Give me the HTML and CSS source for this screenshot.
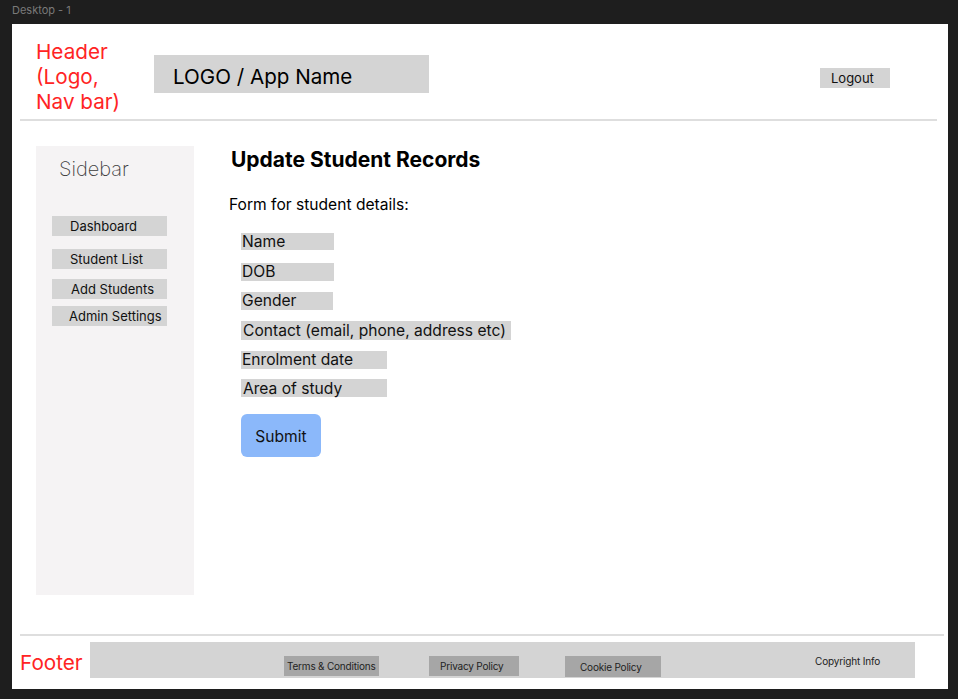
FILE: index.html
```html
<!DOCTYPE html>
<html lang="en">
<head>
<meta charset="utf-8">
<title>Desktop - 1</title>
<link rel="stylesheet" href="styles.css">
</head>
<body>
<div class="canvas-label">Desktop - 1</div>
<div class="frame">
  <header class="header">
    <div class="note note-header">Header<br>(Logo,<br>Nav bar)</div>
    <div class="logo">LOGO / App Name</div>
    <button class="logout">Logout</button>
  </header>
  <div class="body">
    <aside class="sidebar">
      <div class="sidebar-title">Sidebar</div>
      <nav class="side-nav">
        <a class="side-item side-dash">Dashboard</a>
        <a class="side-item side-list">Student List</a>
        <a class="side-item side-add">Add Students</a>
        <a class="side-item side-admin">Admin Settings</a>
      </nav>
    </aside>
    <main class="content">
      <h1 class="title">Update Student Records</h1>
      <p class="form-intro">Form for student details:</p>
      <form class="form">
        <div class="field field-name">Name</div>
        <div class="field field-dob">DOB</div>
        <div class="field field-gender">Gender</div>
        <div class="field field-contact">Contact (email, phone, address etc)</div>
        <div class="field field-enrol">Enrolment date</div>
        <div class="field field-area">Area of study</div>
        <button type="button" class="submit">Submit</button>
      </form>
    </main>
  </div>
  <footer class="footer">
    <div class="footer-row">
      <div class="note note-footer">Footer</div>
      <div class="footer-bar">
        <a class="foot-link foot-terms">Terms &amp; Conditions</a>
        <a class="foot-link foot-privacy">Privacy Policy</a>
        <a class="foot-link foot-cookie">Cookie Policy</a>
        <span class="copyright">Copyright Info</span>
      </div>
    </div>
  </footer>
</div>
</body>
</html>
```

FILE: styles.css
```css
* { box-sizing: border-box; }

html, body {
  margin: 0;
  padding: 0;
  background: #1e1e1e;
  font-family: Inter, "Noto Sans", sans-serif;
  color: #000;
}

body {
  width: 958px;
  height: 699px;
  overflow: hidden;
}

.canvas-label {
  height: 24px;
  padding-left: 12px;
  font-size: 11px;
  line-height: 20px;
  color: #7a7a7a;
}

.frame {
  margin-left: 12px;
  width: 936px;
  height: 665px;
  background: #fff;
  display: flex;
  flex-direction: column;
}

/* Header */
.header {
  margin-left: 8px;
  width: 917px;
  height: 97px;
  border-bottom: 2px solid #dedede;
  padding: 15px 0 0 16px;
  display: flex;
  align-items: flex-start;
}

.note {
  color: #ff2424;
  font-size: 20.7px;
  line-height: 25px;
}

.note-header {
  width: 118px;
  flex: none;
}

.logo {
  margin-top: 16px;
  width: 275px;
  height: 38px;
  background: #d4d4d4;
  padding-left: 19px;
  font-size: 20.6px;
  line-height: 43px;
}

.logout {
  margin: 29px 47px 0 auto;
  width: 70px;
  height: 20px;
  border: 0;
  background: #d4d4d4;
  padding: 0 0 0 11px;
  text-align: left;
  font-family: inherit;
  font-size: 13px;
  line-height: 16px;
  color: #111;
}

/* Body */
.body {
  flex: 1;
  display: flex;
  align-items: flex-start;
  padding: 25px 0 0 24px;
  gap: 35px;
}

.sidebar {
  width: 158px;
  height: 449px;
  background: #f5f3f4;
  padding: 11px 0 0 16px;
}

.sidebar-title {
  padding-left: 7px;
  font-size: 20px;
  font-weight: 200;
  line-height: 24px;
  color: #3c3c3c;
  margin-bottom: 35px;
}

.side-nav {
  display: flex;
  flex-direction: column;
}

.side-item {
  width: 115px;
  height: 20px;
  background: #d4d4d4;
  padding-left: 18px;
  font-size: 13px;
  line-height: 20px;
  color: #111;
}

.side-list { margin-top: 13px; }
.side-add { margin-top: 10px; padding-left: 19px; }
.side-admin { margin-top: 7px; padding-left: 17px; }

.title {
  margin: 0;
  padding-left: 2px;
  padding-top: 2px;
  font-size: 21px;
  font-weight: 700;
  line-height: 24px;
}

.form-intro {
  margin: 23px 0 0;
  font-size: 15.6px;
  line-height: 20px;
}

.form {
  margin: 18px 0 0 12px;
  display: flex;
  flex-direction: column;
  align-items: flex-start;
  gap: 11px;
}

.field {
  height: 18px;
  background: #d4d4d4;
  padding-left: 1px;
  font-size: 15.6px;
  line-height: 18px;
  color: #111;
}

.field-name { width: 93px; height: 17px; }
.field-dob { width: 93px; margin-top: 2px; }
.field-gender { width: 92px; }
.field-contact { width: 270px; height: 19px; padding-left: 2px; line-height: 20px; }
.field-enrol { width: 146px; }
.field-area { width: 146px; margin-top: -1px; padding-left: 2px; line-height: 19px; }

.submit {
  margin-top: 6px;
  width: 80px;
  height: 43px;
  border: 0;
  border-radius: 6px;
  background: #8bb8fa;
  font-family: inherit;
  font-size: 15.6px;
  color: #111;
  padding: 2px 0 0;
}

/* Footer */
.footer {
  margin-left: 8px;
  width: 924px;
  border-top: 2px solid #dedede;
  padding-top: 6px;
  height: 55px;
}

.footer-row {
  display: flex;
  align-items: center;
}

.note-footer {
  width: 70px;
  flex: none;
  line-height: 24px;
  margin-top: 6px;
}

.footer-bar {
  width: 825px;
  height: 36px;
  background: #d4d4d4;
  display: flex;
  align-items: flex-start;
  padding: 14px 0 0 194px;
}

.foot-link {
  height: 20px;
  background: #a6a6a6;
  font-size: 10px;
  line-height: 21px;
  letter-spacing: -0.2px;
  white-space: nowrap;
  color: #222;
  flex: none;
}

.foot-terms { width: 95px; padding-left: 3px; }
.foot-privacy { width: 90px; padding-left: 11px; margin-left: 50px; }
.foot-cookie { width: 96px; height: 21px; padding-left: 15px; margin-left: 46px; line-height: 22px; }

.copyright {
  margin-left: 154px;
  margin-top: -1px;
  font-size: 10px;
  line-height: 12px;
  letter-spacing: -0.15px;
  white-space: nowrap;
  color: #222;
}
```
